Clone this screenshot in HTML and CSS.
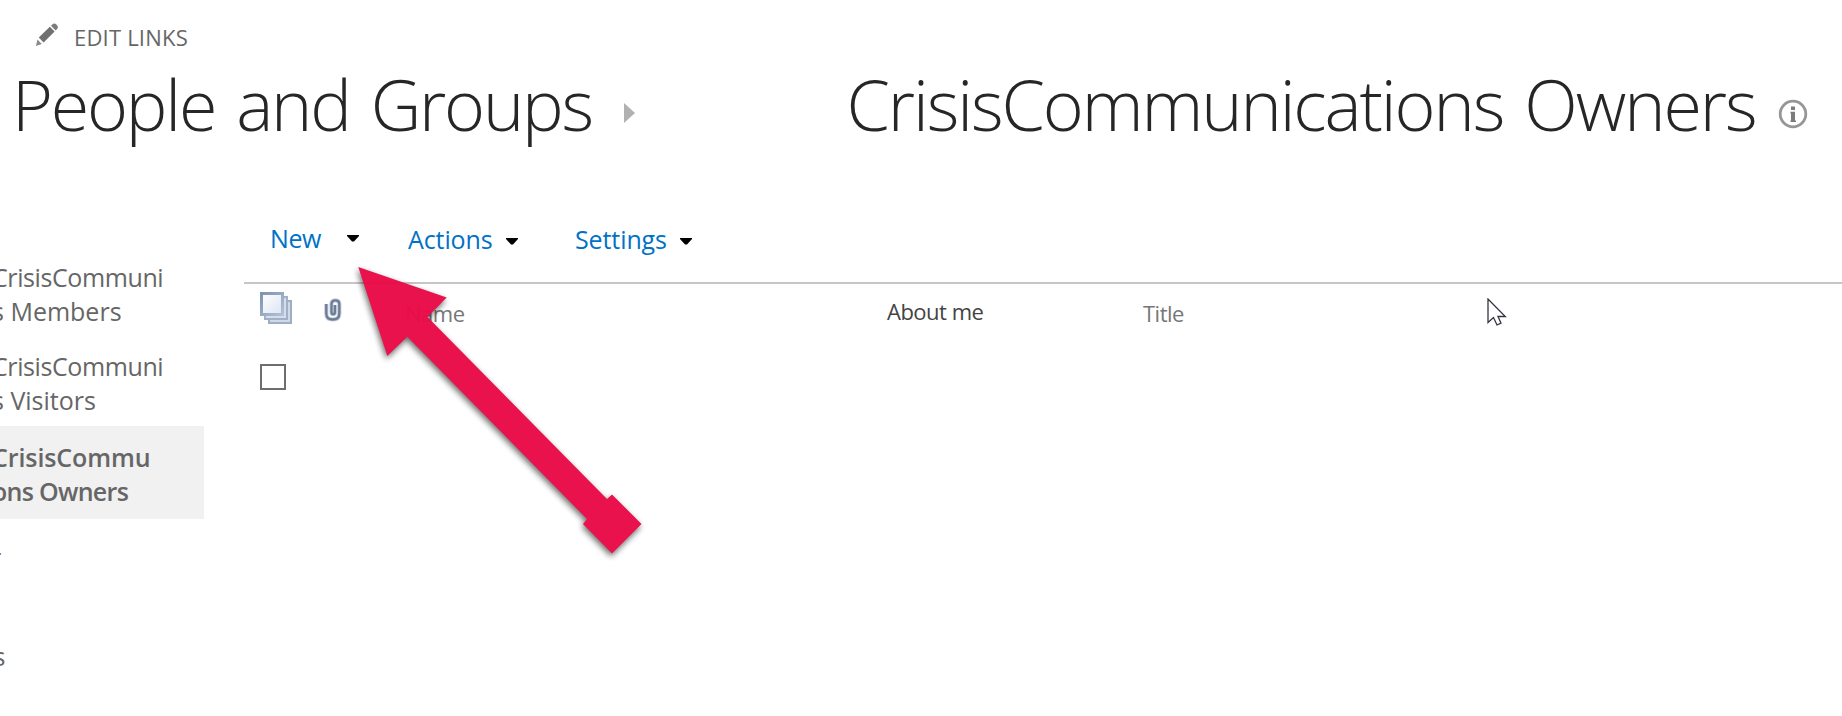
FILE: index.html
```html
<!DOCTYPE html>
<html lang="en">
<head>
<meta charset="utf-8">
<title>People and Groups</title>
<link rel="stylesheet" href="styles.css">
</head>
<body>
<div class="page">
  <div class="edit-links">
    <svg class="pencil" width="24" height="24" viewBox="0 0 24 24"><path d="M1 23 2.4 16.6 6.8 21.1Z" fill="#8a8a8a"/><path d="M3.8 14.6 14.8 3.8 19.6 8.6 8.6 19.6Z" fill="#707070"/><path d="M16 2.8 17.8 1Q19.7-.2 21.6 1.7T22.6 5.4L20.6 7.4Z" fill="#7c7c7c"/></svg>
    <span class="edit-label">EDIT LINKS</span>
  </div>
  <header class="titles">
    <h1 class="title title-site">People and Groups</h1>
    <svg class="crumb" width="11" height="20" viewBox="0 0 11 20"><path d="M0 0 11 10 0 20Z" fill="#b1b1b1"/></svg>
    <h1 class="title title-group">CrisisCommunications Owners</h1>
    <svg class="info" width="30" height="30" viewBox="0 0 30 30"><circle cx="15" cy="15" r="12.8" fill="none" stroke="#969696" stroke-width="2.8"/><path d="M13 7.5h4v3.4h-4zM12.5 12.8h4.5v8.7h1v1.5h-5.5v-1.5h.5v-7h-.5z" fill="#7c7c7c"/></svg>
  </header>
  <div class="body">
    <nav class="sidebar">
      <a class="group members"><span class="line">CrisisCommuni</span><span class="line rest">s Members</span></a>
      <a class="group visitors"><span class="line">CrisisCommuni</span><span class="line rest">s Visitors</span></a>
      <a class="group owners"><span class="line">CrisisCommu</span><span class="line rest">ons Owners</span></a>
      <a class="group cut-r">r</a>
      <a class="group cut-s">s</a>
    </nav>
    <main class="main">
      <div class="toolbar">
        <span class="menu menu-new">New</span><svg class="caret caret-new" width="12" height="7" viewBox="0 0 12 7"><path d="M0 0H12V1L7 6.5H5L0 1Z"/></svg>
        <span class="menu menu-actions">Actions</span><svg class="caret" width="12" height="7" viewBox="0 0 12 7"><path d="M0 0H12V1L7 6.5H5L0 1Z"/></svg>
        <span class="menu menu-settings">Settings</span><svg class="caret" width="12" height="7" viewBox="0 0 12 7"><path d="M0 0H12V1L7 6.5H5L0 1Z"/></svg>
      </div>
      <div class="columns">
        <svg class="select-all" width="32" height="32" viewBox="0 0 32 32">
          <defs><linearGradient id="sheet" x1="0" y1="0" x2="1" y2="1"><stop offset="0" stop-color="#fff"/><stop offset="1" stop-color="#dbe4f4"/></linearGradient>
          <linearGradient id="edge" x1="0" y1="0" x2="1" y2="1"><stop offset="0" stop-color="#7f93b0"/><stop offset="1" stop-color="#b3c0d5"/></linearGradient></defs>
          <rect x="9" y="9" width="22" height="22" fill="#d0d9e8" stroke="#a0aec4" stroke-width="2"/>
          <rect x="5" y="5" width="22" height="22" fill="#d3dded" stroke="#a2b0c7" stroke-width="2"/>
          <rect x="1.5" y="1.5" width="21" height="21" fill="url(#sheet)" stroke="url(#edge)" stroke-width="3"/>
        </svg>
        <svg class="clip" width="18" height="24" viewBox="0 0 18 24"><path d="M2.3 6V15.5Q2.3 21.5 8.8 21.5T15.3 15.5V6Q15.3 2.3 11.4 2.3T7.5 6V14Q7.5 16.2 9.2 16.2T10.9 14V7" fill="none" stroke="#c6ceda" stroke-width="4.2"/><path d="M2.3 6V15.5Q2.3 21.5 8.8 21.5T15.3 15.5V6Q15.3 2.3 11.4 2.3T7.5 6V14Q7.5 16.2 9.2 16.2T10.9 14V7" fill="none" stroke="#6b7d95" stroke-width="2.3"/></svg>
        <span class="col col-name">Name</span>
        <span class="col col-about">About me</span>
        <span class="col col-title">Title</span>
      </div>
      <div class="checkbox"></div>
    </main>
  </div>
  <svg class="arrow" width="320" height="320" viewBox="340 250 320 320"><path d="M358.3 267 446.7 297.5 427.5 317 607 499 612 494.5 641.5 524 612 553.5 583 524 587 519 407.3 336.7 387.3 356Z" fill="#ea0b48"/></svg>
  <svg class="cursor" width="20" height="28" viewBox="0 0 20 28"><path d="M1 1V24.5L6.5 19.5 10 27 14 25.2 11 18.5H18.3Z" fill="#fff" stroke="#343440" stroke-width="1.3"/></svg>
</div>
</body>
</html>
```
FILE: styles.css
```css
* { box-sizing: border-box; }
body { margin: 0; background: #fff; font-family: "Open Sans", "Noto Sans", sans-serif; }
.page { position: relative; width: 1842px; height: 716px; overflow: hidden; display: flex; flex-direction: column; white-space: nowrap; }
svg { display: block; flex: none; }

.edit-links { display: flex; height: 60px; padding-left: 35px; }
.pencil { margin-top: 23px; }
.edit-label { margin: 22px 0 0 15px; font-size: 22px; line-height: 30px; letter-spacing: 0.2px; color: #666; }

.titles { display: flex; height: 170px; }
.title { flex: none; margin: -1px 0 0; font-size: 70px; font-weight: 300; line-height: 90px; color: #262626; }
.title-site { width: 612.5px; padding-left: 12px; letter-spacing: -2.2px; word-spacing: 5px; }
.crumb { margin: 43px 0 0 11px; }
.title-group { width: 932px; margin-left: 212px; letter-spacing: -2.1px; word-spacing: 5px; }
.info { margin-top: 39px; margin-left: -1px; }

.body { display: flex; flex: 1; }
.sidebar { width: 204px; flex: none; padding-top: 30px; font-size: 25px; color: #666; }
.group { display: block; line-height: 34.3px; }
.line { display: block; margin-left: -8px; letter-spacing: -0.4px; }
.rest { margin-left: -8px; letter-spacing: 0; }
.visitors { margin-top: 20.5px; }
.owners { height: 93px; margin-top: 8px; padding-top: 14px; background: #f1f1f1; font-weight: 600; }
.owners .line { letter-spacing: -0.1px; }
.owners .rest { letter-spacing: -0.7px; }
.cut-r { margin: 21px 0 0 -9px; }
.cut-s { margin: 65px 0 0 -6.5px; }

.main { flex: 1; margin-left: 40px; }
.toolbar { display: flex; height: 54px; border-bottom: 2px solid #c6c6c6; font-size: 25px; line-height: 34px; color: #0072c6; }
.menu { flex: none; letter-spacing: -0.1px; }
.menu-new { width: 77px; margin-left: 26px; margin-top: -9px; letter-spacing: -0.4px; }
.caret { margin-top: 8px; }
.caret-new { margin-top: 5px; }
.menu-actions { width: 98px; margin: -8px 0 0 49px; }
.menu-settings { width: 105px; margin: -8px 0 0 57px; }
.columns { display: flex; height: 80px; padding: 8px 0 0 16px; font-size: 22px; line-height: 30px; color: #777; }
.clip { margin: 6px 0 0 32px; }
.col { flex: none; letter-spacing: -0.5px; }
.col-name { width: 482px; margin: 6px 0 0 63px; }
.col-about { width: 256px; margin-top: 4px; color: #444; }
.col-title { margin-top: 6px; }
.checkbox { width: 26px; height: 26px; margin-left: 16px; border: 2px solid #6e6e6e; }

.arrow { position: absolute; left: 340px; top: 250px; opacity: .97; filter: drop-shadow(-1px 3px 3px rgba(0, 0, 0, .6)); }
.cursor { position: absolute; left: 1487px; top: 298px; }
```
